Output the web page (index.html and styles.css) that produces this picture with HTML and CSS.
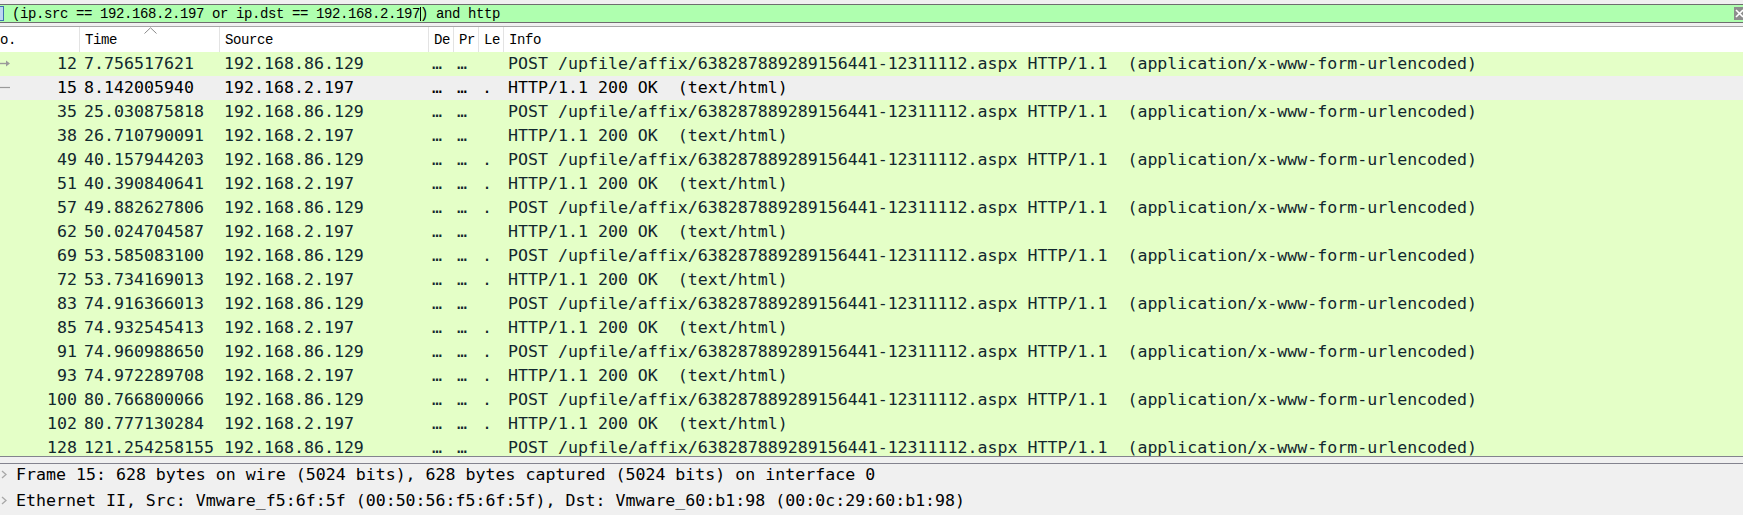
FILE: index.html
```html
<!DOCTYPE html>
<html>
<head>
<meta charset="utf-8">
<link rel="stylesheet" href="styles.css">
</head>
<body>
<div class="app">
  <div class="filter">
    <span class="bookmark"></span>
    <span class="filter-text">(ip.src == 192.168.2.197 or ip.dst == 192.168.2.197<span class="caret"></span>) and http</span>
    <span class="clear"><svg width="9" height="13" viewBox="0 0 9 13"><path d="M2 3 L9 10 M9 3 L2 10" stroke="#fff" stroke-width="1.6" fill="none"/></svg></span>
  </div>

  <div class="plist">
    <div class="row head">
      <div class="c no">o.</div>
      <div class="c time">Time<svg class="sort" width="13" height="7" viewBox="0 0 13 7"><path d="M0.5 6.5 L6.5 0.8 L12.5 6.5" stroke="#8a8a8a" stroke-width="1" fill="none"/></svg></div>
      <div class="c">Source</div>
      <div class="c">De</div>
      <div class="c">Pr</div>
      <div class="c">Le</div>
      <div class="c last">Info</div>
    </div>

    <div class="row http"><div class="c no"><svg class="rel" width="11" height="9" viewBox="0 0 11 9"><path d="M0 4.5 H8" stroke="#9a9a9a" stroke-width="1.4"/><path d="M6 1.5 L10 4.5 L6 7.5 Z" fill="#9a9a9a"/></svg><span>12</span></div><div class="c">7.756517621</div><div class="c">192.168.86.129</div><div class="c d">…</div><div class="c d">…</div><div class="c d"></div><div class="c">POST /upfile/affix/638287889289156441-12311112.aspx HTTP/1.1  (application/x-www-form-urlencoded)</div></div>
    <div class="row sel"><div class="c no"><svg class="rel" width="11" height="9" viewBox="0 0 11 9"><path d="M0 4.5 H10" stroke="#9a9a9a" stroke-width="1.2"/></svg><span>15</span></div><div class="c">8.142005940</div><div class="c">192.168.2.197</div><div class="c d">…</div><div class="c d">…</div><div class="c d">.</div><div class="c">HTTP/1.1 200 OK  (text/html)</div></div>
    <div class="row http"><div class="c no"><span>35</span></div><div class="c">25.030875818</div><div class="c">192.168.86.129</div><div class="c d">…</div><div class="c d">…</div><div class="c d"></div><div class="c">POST /upfile/affix/638287889289156441-12311112.aspx HTTP/1.1  (application/x-www-form-urlencoded)</div></div>
    <div class="row http"><div class="c no"><span>38</span></div><div class="c">26.710790091</div><div class="c">192.168.2.197</div><div class="c d">…</div><div class="c d">…</div><div class="c d"></div><div class="c">HTTP/1.1 200 OK  (text/html)</div></div>
    <div class="row http"><div class="c no"><span>49</span></div><div class="c">40.157944203</div><div class="c">192.168.86.129</div><div class="c d">…</div><div class="c d">…</div><div class="c d">.</div><div class="c">POST /upfile/affix/638287889289156441-12311112.aspx HTTP/1.1  (application/x-www-form-urlencoded)</div></div>
    <div class="row http"><div class="c no"><span>51</span></div><div class="c">40.390840641</div><div class="c">192.168.2.197</div><div class="c d">…</div><div class="c d">…</div><div class="c d">.</div><div class="c">HTTP/1.1 200 OK  (text/html)</div></div>
    <div class="row http"><div class="c no"><span>57</span></div><div class="c">49.882627806</div><div class="c">192.168.86.129</div><div class="c d">…</div><div class="c d">…</div><div class="c d">.</div><div class="c">POST /upfile/affix/638287889289156441-12311112.aspx HTTP/1.1  (application/x-www-form-urlencoded)</div></div>
    <div class="row http"><div class="c no"><span>62</span></div><div class="c">50.024704587</div><div class="c">192.168.2.197</div><div class="c d">…</div><div class="c d">…</div><div class="c d"></div><div class="c">HTTP/1.1 200 OK  (text/html)</div></div>
    <div class="row http"><div class="c no"><span>69</span></div><div class="c">53.585083100</div><div class="c">192.168.86.129</div><div class="c d">…</div><div class="c d">…</div><div class="c d">.</div><div class="c">POST /upfile/affix/638287889289156441-12311112.aspx HTTP/1.1  (application/x-www-form-urlencoded)</div></div>
    <div class="row http"><div class="c no"><span>72</span></div><div class="c">53.734169013</div><div class="c">192.168.2.197</div><div class="c d">…</div><div class="c d">…</div><div class="c d">.</div><div class="c">HTTP/1.1 200 OK  (text/html)</div></div>
    <div class="row http"><div class="c no"><span>83</span></div><div class="c">74.916366013</div><div class="c">192.168.86.129</div><div class="c d">…</div><div class="c d">…</div><div class="c d"></div><div class="c">POST /upfile/affix/638287889289156441-12311112.aspx HTTP/1.1  (application/x-www-form-urlencoded)</div></div>
    <div class="row http"><div class="c no"><span>85</span></div><div class="c">74.932545413</div><div class="c">192.168.2.197</div><div class="c d">…</div><div class="c d">…</div><div class="c d">.</div><div class="c">HTTP/1.1 200 OK  (text/html)</div></div>
    <div class="row http"><div class="c no"><span>91</span></div><div class="c">74.960988650</div><div class="c">192.168.86.129</div><div class="c d">…</div><div class="c d">…</div><div class="c d">.</div><div class="c">POST /upfile/affix/638287889289156441-12311112.aspx HTTP/1.1  (application/x-www-form-urlencoded)</div></div>
    <div class="row http"><div class="c no"><span>93</span></div><div class="c">74.972289708</div><div class="c">192.168.2.197</div><div class="c d">…</div><div class="c d">…</div><div class="c d">.</div><div class="c">HTTP/1.1 200 OK  (text/html)</div></div>
    <div class="row http"><div class="c no"><span>100</span></div><div class="c">80.766800066</div><div class="c">192.168.86.129</div><div class="c d">…</div><div class="c d">…</div><div class="c d">.</div><div class="c">POST /upfile/affix/638287889289156441-12311112.aspx HTTP/1.1  (application/x-www-form-urlencoded)</div></div>
    <div class="row http"><div class="c no"><span>102</span></div><div class="c">80.777130284</div><div class="c">192.168.2.197</div><div class="c d">…</div><div class="c d">…</div><div class="c d">.</div><div class="c">HTTP/1.1 200 OK  (text/html)</div></div>
    <div class="row http"><div class="c no"><span>128</span></div><div class="c">121.254258155</div><div class="c">192.168.86.129</div><div class="c d">…</div><div class="c d">…</div><div class="c d"></div><div class="c">POST /upfile/affix/638287889289156441-12311112.aspx HTTP/1.1  (application/x-www-form-urlencoded)</div></div>
  </div>

  <div class="splitter"></div>

  <div class="details">
    <div class="drow"><svg class="exp" width="6" height="9" viewBox="0 0 6 9"><path d="M1 1 L5 4.5 L1 8" stroke="#a8a8a8" stroke-width="1.3" fill="none"/></svg><span>Frame 15: 628 bytes on wire (5024 bits), 628 bytes captured (5024 bits) on interface 0</span></div>
    <div class="drow"><svg class="exp" width="6" height="9" viewBox="0 0 6 9"><path d="M1 1 L5 4.5 L1 8" stroke="#a8a8a8" stroke-width="1.3" fill="none"/></svg><span>Ethernet II, Src: Vmware_f5:6f:5f (00:50:56:f5:6f:5f), Dst: Vmware_60:b1:98 (00:0c:29:60:b1:98)</span></div>
  </div>
</div>
</body>
</html>
```

FILE: styles.css
```css
html, body {
  margin: 0;
  padding: 0;
}
body {
  background: #f0f0f0;
  width: 1743px;
  height: 515px;
  overflow: hidden;
}
.app {
  display: flex;
  flex-direction: column;
  height: 515px;
  padding-top: 4px;
  box-sizing: border-box;
}

/* display filter bar */
.filter {
  height: 19px;
  box-sizing: border-box;
  border-top: 1px solid #6e6e6e;
  border-bottom: 1px solid #6e6e6e;
  background: #afffaf;
  display: flex;
  align-items: center;
  font-family: "Liberation Mono", monospace;
  font-size: 14px;
  letter-spacing: -0.4px;
  color: #000;
}
.bookmark {
  width: 4px;
  height: 15px;
  box-sizing: border-box;
  background: #bcd6f2;
  border: 1px solid #3c6fb0;
  border-left: none;
  flex: none;
}
.filter-text {
  margin-left: 8px;
  white-space: pre;
  flex: 1;
  line-height: 17px;
  padding-top: 2px;
}
.caret {
  display: inline-block;
  width: 0;
  height: 14px;
  border-left: 1px solid #000;
  vertical-align: -3px;
  margin-right: -1px;
}
.clear {
  width: 9px;
  height: 13px;
  background: #8d8d8d;
  flex: none;
  display: flex;
}

/* packet list */
.plist {
  margin-top: 3px;
  height: 431px;
  box-sizing: border-box;
  border-top: 1px solid #a6a6a6;
  border-bottom: 1px solid #83838e;
  background: #fff;
  overflow: hidden;
  flex: none;
}
.row {
  display: grid;
  grid-template-columns: 80px 140px 209px 25px 25px 25px 1fr;
  height: 24px;
  align-items: center;
  font-family: "DejaVu Sans Mono", monospace;
  font-size: 16.6px;
  color: #12272e;
}
.row.http { background: #e4ffc7; }
.row.sel { background: #efefef; color: #000; }
.row .c {
  white-space: pre;
  overflow: hidden;
  padding-left: 4px;
  line-height: 24px;
}
.row .c.d { padding-left: 3px; }
.row .c.no {
  padding-left: 0;
  padding-right: 3px;
  display: flex;
  align-items: center;
  justify-content: flex-end;
  position: relative;
}
.rel {
  position: absolute;
  left: 0;
  top: 7px;
}

.row.head {
  height: 25px;
  background: #fff;
  font-family: "Liberation Mono", monospace;
  font-size: 14px;
  letter-spacing: -0.4px;
  color: #000;
}
.row.head .c {
  height: 25px;
  line-height: 23px;
  padding-top: 2px;
  box-sizing: border-box;
  border-right: 1px solid #e3e3e3;
  padding-left: 5px;
}
.row.head .c.no {
  justify-content: flex-start;
  padding-left: 0;
}
.row.head .c.time {
  position: relative;
  overflow: visible;
}
.row.head .c.last { border-right: none; }
.sort {
  position: absolute;
  left: 64px;
  top: 0;
}

.splitter {
  height: 6px;
  flex: none;
  border-bottom: 1px solid #83838e;
}

/* packet details */
.details {
  flex: 1;
  background: #f0f0f0;
  font-family: "DejaVu Sans Mono", monospace;
  font-size: 16.6px;
  color: #000;
}
.drow {
  height: 26px;
  display: flex;
  align-items: flex-start;
  white-space: pre;
  line-height: 21px;
}
.exp {
  margin-left: 1px;
  margin-right: 9px;
  margin-top: 6px;
  flex: none;
}
```
